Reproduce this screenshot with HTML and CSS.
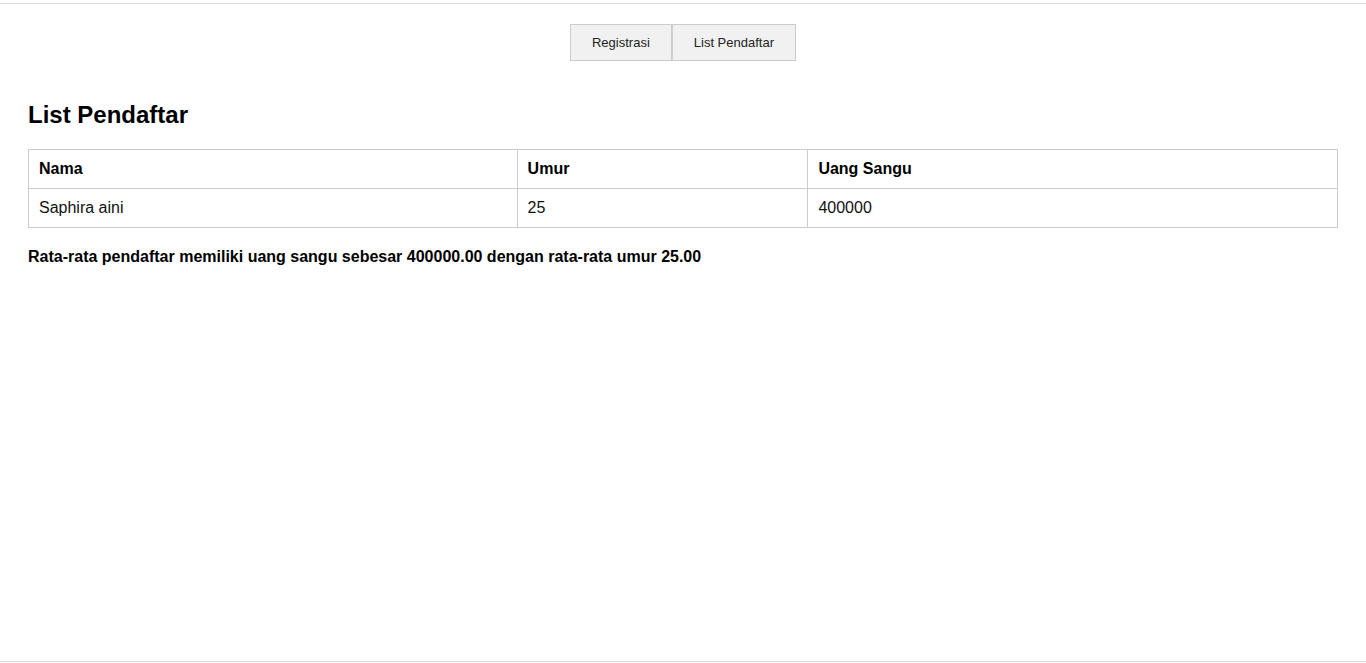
FILE: index.html
```html
<!DOCTYPE html>
<html lang="id">
<head>
<meta charset="utf-8">
<title>List Pendaftar</title>
<link rel="stylesheet" href="styles.css">
</head>
<body>
<div class="topline"></div>
<nav class="tabs">
  <button class="tab">Registrasi</button>
  <button class="tab">List Pendaftar</button>
</nav>
<main class="content">
  <h2 class="title">List Pendaftar</h2>
  <table class="list">
    <colgroup>
      <col class="c-nama">
      <col class="c-umur">
      <col class="c-uang">
    </colgroup>
    <thead>
      <tr><th>Nama</th><th>Umur</th><th>Uang Sangu</th></tr>
    </thead>
    <tbody>
      <tr><td>Saphira aini</td><td>25</td><td>400000</td></tr>
    </tbody>
  </table>
  <p class="summary">Rata-rata pendaftar memiliki uang sangu sebesar 400000.00 dengan rata-rata umur 25.00</p>
</main>
<div class="bottomline"></div>
</body>
</html>
```
FILE: styles.css
```css
html, body {
  margin: 0;
  padding: 0;
  background: #fff;
}
body {
  font-family: "Liberation Sans", Arial, sans-serif;
  color: #000;
  min-height: 100vh;
  display: flex;
  flex-direction: column;
  box-sizing: border-box;
}
.topline {
  margin-top: 3px;
  height: 1px;
  background: #dadada;
}
.tabs {
  display: flex;
  justify-content: center;
  margin-top: 20px;
}
.tab {
  font-family: "Liberation Sans", Arial, sans-serif;
  font-size: 13px;
  line-height: 15px;
  color: #222;
  background: #f1f1f1;
  border: 1px solid #cccccc;
  padding: 10px 21px;
  margin: 0;
  height: 37px;
}
.tab + .tab {
  border-left: 1px solid #d0d0d0;
}
.content {
  padding: 0 28px;
}
.title {
  font-size: 24px;
  font-weight: bold;
  margin: 40px 0 20px;
}
.list {
  width: 100%;
  border-collapse: collapse;
  font-size: 16px;
}
.c-nama { width: 489px; }
.c-umur { width: 291px; }
.c-uang { width: 530px; }
.list th, .list td {
  border: 1px solid #cccccc;
  padding: 10px;
  text-align: left;
  line-height: 18px;
}
.list th { font-weight: bold; }
.list td { color: #111; }
.summary {
  font-size: 16px;
  font-weight: bold;
  margin: 20px 0;
}
.bottomline {
  margin-top: auto;
  margin-bottom: 1px;
  height: 1px;
  background: #d6d6d6;
}
```
